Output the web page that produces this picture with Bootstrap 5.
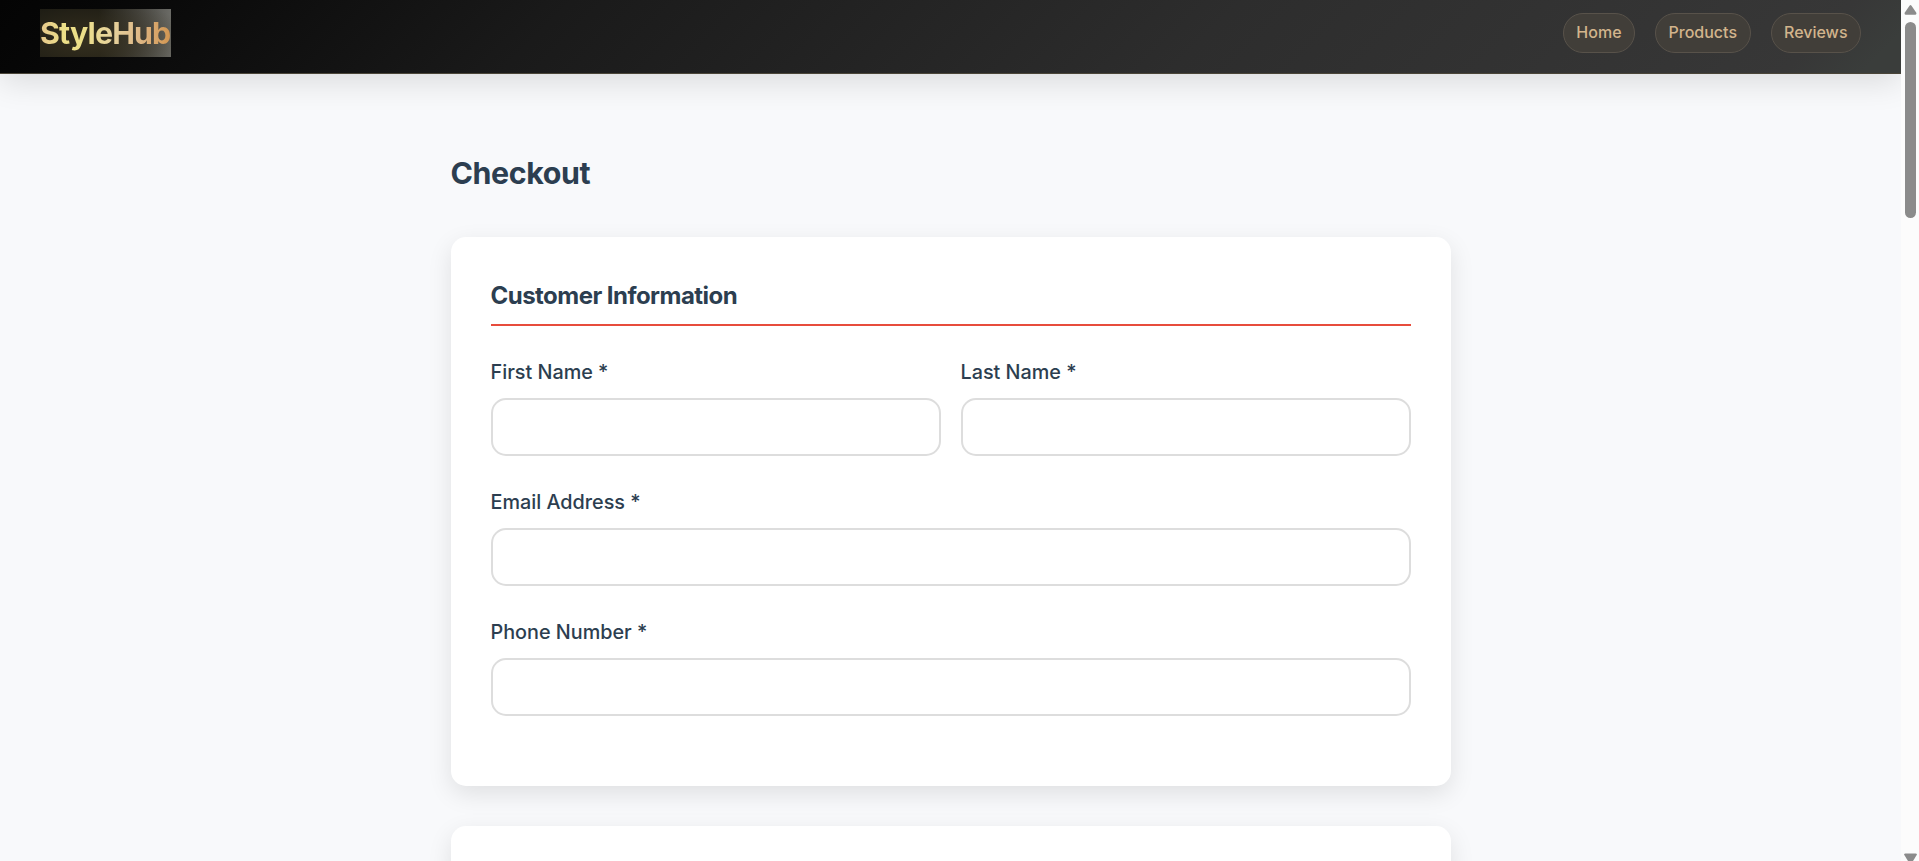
<!DOCTYPE html>
<html lang="en">
<head>
<meta charset="utf-8">
<meta name="viewport" content="width=device-width, initial-scale=1">
<title>StyleHub - Checkout</title>
<link href="https://cdn.jsdelivr.net/npm/bootstrap@5.3.0/dist/css/bootstrap.min.css" rel="stylesheet">
<style>
body{font-family:Inter,sans-serif;background:#f8f9fb;color:#2c3e50;height:100vh}
.site-header{height:74px;padding:9px 40px 0;background:linear-gradient(135deg,#040404 0%,#060606 4%,#1a1a1a 29%,#2d2d2d 63%,#373737 94%,#3a3d3b 98%);border-bottom:1px solid #4a4538;box-shadow:0 8px 32px rgba(0,0,0,.12)}
.brand-box{width:131px;height:48px;line-height:48px;background:radial-gradient(ellipse 75% 90% at 38% 65%,rgba(56,50,32,.9) 0,rgba(56,50,32,0) 100%),linear-gradient(90deg,#1b1a13 45%,#45443f 75%,#6b6b66 100%);font-size:30.4px;font-weight:700;letter-spacing:-.85px}
.brand-text{display:block;background:linear-gradient(90deg,#e6c88c 0,#ecdf88 18%,#ecdf88 32%,#e6d29c 55%,#deb887 75%,#d29550 100%);-webkit-background-clip:text;background-clip:text;color:transparent}
.menu-list{gap:20px}
.menu-pill{height:40px;line-height:36px;margin-top:4px;padding:0 12.5px;border:1px solid #58524a;border-radius:20px;background:#413e39;color:#d2b48c;font-size:16px;font-weight:500;text-decoration:none}
.checkout-wrap{width:1000px}
.page-title{font-size:30.4px;font-weight:700;letter-spacing:-.42px;line-height:48px;margin:75px 0 40px}
.panel{border-radius:15px;padding:40px;margin-bottom:40px;box-shadow:0 8px 25px rgba(0,0,0,.1)}
.panel-title{font-size:24px;font-weight:700;letter-spacing:-.53px;line-height:38px;padding-bottom:9px;border-bottom:2px solid #e74c3c;margin-bottom:30px}
.field-row{gap:20px}
.field-group{margin-bottom:30px}
.field-label{font-size:19.8px;font-weight:500;line-height:32px;margin-bottom:10px;display:block}
.field-box{height:58px;border:2px solid #ddd;border-radius:15px}
.field-box:focus{border-color:#e74c3c;box-shadow:none}
.scroll-rail{width:18px;background:#fcfcfc}
.scroll-thumb{width:11px;height:196px;border-radius:6px;background:#8b8b8b}
</style>
</head>
<body class="d-flex overflow-hidden">
<div class="flex-grow-1 overflow-hidden">
  <header class="site-header d-flex justify-content-between align-items-start">
    <div class="brand-box"><span class="brand-text">StyleHub</span></div>
    <nav class="menu-list d-flex">
      <a class="menu-pill" href="#">Home</a>
      <a class="menu-pill" href="#">Products</a>
      <a class="menu-pill" href="#">Reviews</a>
    </nav>
  </header>
  <main class="checkout-wrap mx-auto">
    <h1 class="page-title">Checkout</h1>
    <section class="panel bg-white">
      <h2 class="panel-title">Customer Information</h2>
      <form>
        <div class="field-row d-flex">
          <div class="field-group w-50"><label class="field-label" for="first">First Name *</label><input class="form-control field-box" id="first"></div>
          <div class="field-group w-50"><label class="field-label" for="last">Last Name *</label><input class="form-control field-box" id="last"></div>
        </div>
        <div class="field-group"><label class="field-label" for="email">Email Address *</label><input class="form-control field-box" id="email" type="email"></div>
        <div class="field-group"><label class="field-label" for="phone">Phone Number *</label><input class="form-control field-box" id="phone" type="tel"></div>
      </form>
    </section>
    <section class="panel bg-white"></section>
  </main>
</div>
<div class="scroll-rail d-flex flex-column align-items-center flex-shrink-0">
  <svg width="18" height="22" viewBox="0 0 18 22"><path d="M8.5 5.7Q9.5 4.5 10.5 5.7L15.3 12.8Q16 14.5 14.5 14.7H4.5Q3 14.5 3.7 12.8Z" fill="#8b8b8b"/></svg>
  <div class="scroll-thumb"></div>
  <svg class="mt-auto" width="18" height="8" viewBox="0 0 18 8"><path d="M3 1.5Q3.3 .5 4.5 .5H14.5Q15.7 .5 16 1.5L12 8H7Z" fill="#8b8b8b"/></svg>
</div>
<script src="https://cdn.jsdelivr.net/npm/bootstrap@5.3.0/dist/js/bootstrap.bundle.min.js"></script>
</body>
</html>
